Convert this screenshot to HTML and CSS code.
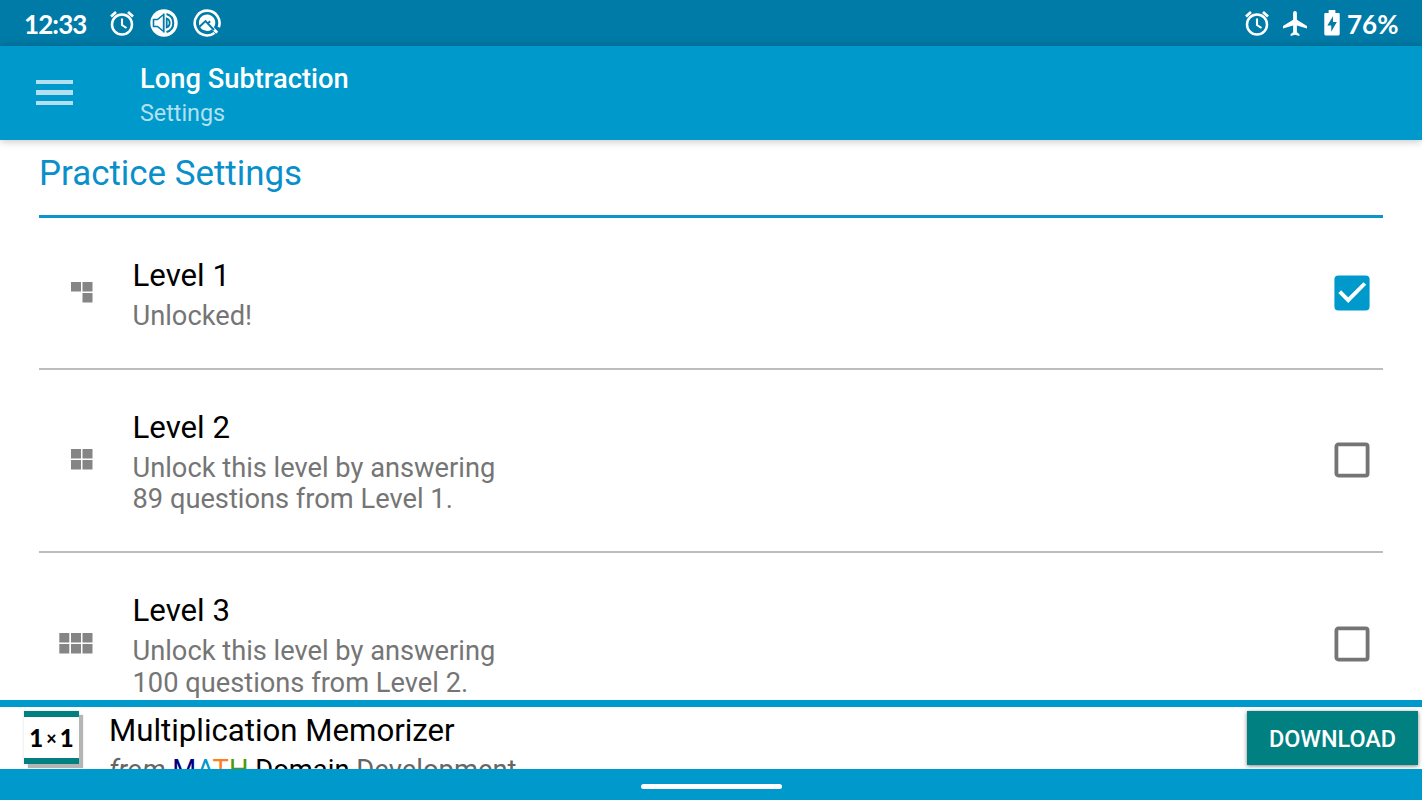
FILE: index.html
```html
<!DOCTYPE html>
<html lang="en">
<head>
    <meta charset="UTF-8">
    <meta name="viewport" content="width=device-width, initial-scale=1.0">
    <title>Long Subtraction - Settings</title>
    <link rel="stylesheet" href="styles.css">
</head>
<body>
    <div class="status-bar">
        <div class="status-left">
            <span class="clock">12:33</span>
            <svg class="alarm" width="26" height="28" viewBox="0 0 26 28" fill="none" stroke="#fff">
                <circle cx="13" cy="15.5" r="10" stroke-width="2.5"/>
                <path d="M2 7.5l5-4.5M24 7.5L19 3" stroke-width="2.7"/>
                <path d="M13 9.5v6.5l4.5 3" stroke-width="2.1"/>
            </svg>
            <svg width="28" height="28" viewBox="0 0 28 28">
                <circle cx="14" cy="14" r="13.7" fill="#fff"/>
                <path d="M3.5 10.5h4L13 6" fill="none" stroke="#007aa6" stroke-width="1.6"/>
                <path d="M3.5 10v8M3.500 17.5h4L13 22" fill="none" stroke="#007aa6" stroke-width="1.6"/>
                <path d="M13.7 4.5v19" stroke="#007aa6" stroke-width="1.8"/>
                <path d="M16.7 9.5v9c4-1.5 4-7.5 0-9z" fill="none" stroke="#007aa6" stroke-width="1.8"/>
                <path d="M16.5 5c9 2.5 9 15.5 0 18" fill="none" stroke="#007aa6" stroke-width="2"/>
            </svg>
            <svg width="28" height="28" viewBox="0 0 28 28">
                <path d="M21.5 24A12.4 12.4 0 1 1 25.8 18.2" fill="none" stroke="#fff" stroke-width="2.6"/>
                <path d="M18 20.9A8.2 8.2 0 1 1 21.5 17.2" fill="#fff"/>
                <path d="M15.5 15l8.7 8.7" stroke="#fff" stroke-width="3"/>
                <path d="M6.5 17.8l6-5.8 8.5 9M15 14.2l2.2-2" fill="none" stroke="#007aa6" stroke-width="1.9"/>
            </svg>
        </div>
        <div class="status-right">
            <svg class="alarm" width="26" height="28" viewBox="0 0 26 28" fill="none" stroke="#fff">
                <circle cx="13" cy="15.5" r="10" stroke-width="2.5"/>
                <path d="M2 7.5l5-4.5M24 7.5L19 3" stroke-width="2.7"/>
                <path d="M13 9.5v6.5l4.5 3" stroke-width="2.1"/>
            </svg>
            <svg class="plane" width="24" height="25" viewBox="2 2 19 20" preserveAspectRatio="none">
                <path d="M21 16v-2l-8-5V3.5c0-.83-.67-1.5-1.5-1.5S10 2.67 10 3.5V9l-8 5v2l8-2.5V19l-2 1.5V22l3.5-1 3.5 1v-1.5L13 19v-5.5l8 2.5z" fill="#fff"/>
            </svg>
            <svg width="16" height="26" viewBox="0 0 16 27">
                <path d="M4.5 0h7v3H15a1 1 0 0 1 1 1v21a1.5 1.5 0 0 1-1.5 1.5h-13A1.5 1.5 0 0 1 0 25V4a1 1 0 0 1 1-1h3.5z" fill="#fff"/>
                <path d="M9 6.5L3.2 16h4v6.5L13 12.5H9z" fill="#007aa6"/>
            </svg>
            <span class="battery">76%</span>
        </div>
    </div>

    <header class="app-bar">
        <div class="menu">
            <span></span>
            <span></span>
            <span></span>
        </div>
        <div class="app-title">
            <h1>Long Subtraction</h1>
            <p>Settings</p>
        </div>
    </header>

    <main class="content">
        <h2>Practice Settings</h2>
        <div class="level">
            <div class="level-icon">
                <svg width="34" height="21" viewBox="0 0 34 21" fill="#858585">
                    <path d="M12 0h10v9.5H12zM23.5 0h10v9.5h-10zM23.5 11h10v9.5h-10z"/>
                </svg>
            </div>
            <div class="level-text">
                <h3>Level 1</h3>
                <p>Unlocked!</p>
            </div>
            <svg class="checkbox" width="36" height="36" viewBox="0 0 36 36">
                <rect x=".4" y=".4" width="35.2" height="35.2" rx="4" fill="#0099cc"/>
                <path d="M5.7 16.7l8.5 8.5L30.8 8.5" fill="none" stroke="#fff" stroke-width="3.9"/>
            </svg>
        </div>
        <div class="level">
            <div class="level-icon">
                <svg width="34" height="21" viewBox="0 0 34 21" fill="#858585">
                    <path d="M12 0h10v9.5H12zM23.5 0h10v9.5h-10zM12 11h10v9.5H12zM23.5 11h10v9.5h-10z"/>
                </svg>
            </div>
            <div class="level-text">
                <h3>Level 2</h3>
                <p>Unlock this level by answering<br>89 questions from Level 1.</p>
            </div>
            <svg class="checkbox" width="36" height="36" viewBox="0 0 36 36">
                <rect x="2.4" y="2.4" width="31.2" height="31.2" rx="2" fill="none" stroke="#757575" stroke-width="3.8"/>
            </svg>
        </div>
        <div class="level">
            <div class="level-icon">
                <svg width="34" height="21" viewBox="0 0 34 21" fill="#858585">
                    <path d="M.3 0h10v9.5H.3zM12 0h10v9.5H12zM23.5 0h10v9.5h-10zM.3 11h10v9.5H.3zM12 11h10v9.5H12zM23.5 11h10v9.5h-10z"/>
                </svg>
            </div>
            <div class="level-text">
                <h3>Level 3</h3>
                <p>Unlock this level by answering<br>100 questions from Level 2.</p>
            </div>
            <svg class="checkbox" width="36" height="36" viewBox="0 0 36 36">
                <rect x="2.4" y="2.4" width="31.2" height="31.2" rx="2" fill="none" stroke="#757575" stroke-width="3.8"/>
            </svg>
        </div>
    </main>

    <div class="banner">
        <div class="banner-logo"><span>1</span><small>×</small><span>1</span></div>
        <div class="banner-text">
            <h3>Multiplication Memorizer</h3>
            <p><em>from</em> <span class="m">M</span><span class="a">A</span><span class="t">T</span><span class="h">H</span> <span class="domain">Domain</span> Development</p>
        </div>
        <button class="download-btn">DOWNLOAD</button>
    </div>

    <div class="nav-bar">
        <div class="handle"></div>
    </div>
</body>
</html>
```
FILE: styles.css
```css
* {
    box-sizing: border-box;
}
body {
    font-family: Roboto, sans-serif;
    background-color: #fff;
    margin: 0;
    height: 800px;
    display: flex;
    flex-direction: column;
    overflow: hidden;
}
h1, h2, h3, p {
    margin: 0;
    font-weight: normal;
    white-space: nowrap;
}
svg {
    display: block;
    flex: none;
}
.status-bar {
    flex: none;
    height: 46px;
    padding: 0 24px;
    background-color: #007aa6;
    color: #fff;
    display: flex;
    justify-content: space-between;
    align-items: center;
}
.status-left, .status-right {
    display: flex;
    align-items: center;
}
.clock, .battery {
    font-family: Lato, sans-serif;
    font-weight: bold;
    font-size: 26px;
    line-height: 46px;
    padding-top: 2px;
}
.clock {
    width: 85px;
    letter-spacing: -0.9px;
}
.status-left {
    gap: 15px;
}
.status-left .clock {
    margin-right: -15px;
}
.status-right .plane {
    margin: 0 17px 0 13px;
}
.battery {
    width: 51px;
    margin-left: 7px;
}
.app-bar {
    flex: none;
    height: 93.5px;
    padding-left: 36px;
    background-color: #0099cc;
    display: flex;
    box-shadow: 0 1px 8px rgba(0,0,0,0.25);
    z-index: 1;
}
.menu {
    width: 104px;
    padding-top: 34px;
    display: flex;
    flex-direction: column;
    gap: 6px;
}
.menu span {
    width: 37px;
    height: 4.4px;
    background-color: #b3e0f0;
}
.app-title {
    padding-top: 16px;
}
.app-title h1 {
    color: #fff;
    font-size: 27.3px;
    font-weight: 500;
    line-height: 34px;
}
.app-title p {
    color: #b3e0f0;
    font-size: 23.3px;
    line-height: 34px;
}
.content {
    flex: 1;
    min-height: 0;
    overflow: hidden;
    padding: 0 39px;
}
.content h2 {
    height: 78.5px;
    line-height: 67px;
    color: #098fca;
    font-size: 34.9px;
    border-bottom: 3px solid #0e94cd;
}
.level {
    display: flex;
    align-items: center;
    border-bottom: 2px solid #bdbdbd;
    padding: 34.4px 13px 35.1px 20px;
}
.level-icon {
    width: 73.5px;
}
.level-text {
    flex: 1;
}
.level-text h3 {
    color: #000;
    font-size: 31.2px;
    line-height: 48.6px;
}
.level-text p {
    color: #757575;
    font-size: 27.25px;
    line-height: 31.6px;
}
.checkbox {
    margin-top: 1px;
}
.banner {
    flex: none;
    height: 69px;
    padding: 4px 4px 0 24px;
    border-top: 7px solid #0099cc;
    display: flex;
    overflow: hidden;
}
.banner-logo {
    width: 55px;
    height: 53px;
    margin-right: 30px;
    background-color: #fff;
    border-top: 6px solid #008080;
    border-bottom: 6px solid #008080;
    box-shadow: 4px 4px 1px #b5b5b5, 0 0 2px 1px #eee;
    display: flex;
    justify-content: center;
    align-items: center;
    gap: 3px;
    font-family: Lato, sans-serif;
    font-size: 24px;
    font-weight: 900;
}
.banner-logo small {
    font-size: 18px;
}
.banner-text {
    flex: 1;
}
.banner-text h3 {
    color: #000;
    font-size: 31.2px;
    line-height: 39px;
}
.banner-text p {
    color: #666;
    font-size: 27.4px;
    line-height: 40px;
}
.m {
    color: #000080;
}
.a {
    color: #0099cc;
}
.t {
    color: #ff7f1e;
}
.h {
    color: #4e9a06;
}
.domain {
    color: #000;
}
.download-btn {
    width: 171px;
    height: 54px;
    padding: 2px 0 0;
    background-color: #008080;
    border: none;
    color: #fff;
    font-family: Roboto, sans-serif;
    font-size: 23.4px;
    font-weight: 500;
    box-shadow: 0 1px 4px rgba(0,0,0,0.5);
}
.nav-bar {
    flex: none;
    height: 31px;
    padding-top: 15px;
    background-color: #0099cc;
    display: flex;
    justify-content: center;
}
.handle {
    width: 141px;
    height: 5px;
    border-radius: 3px;
    background-color: #fff;
}
```
